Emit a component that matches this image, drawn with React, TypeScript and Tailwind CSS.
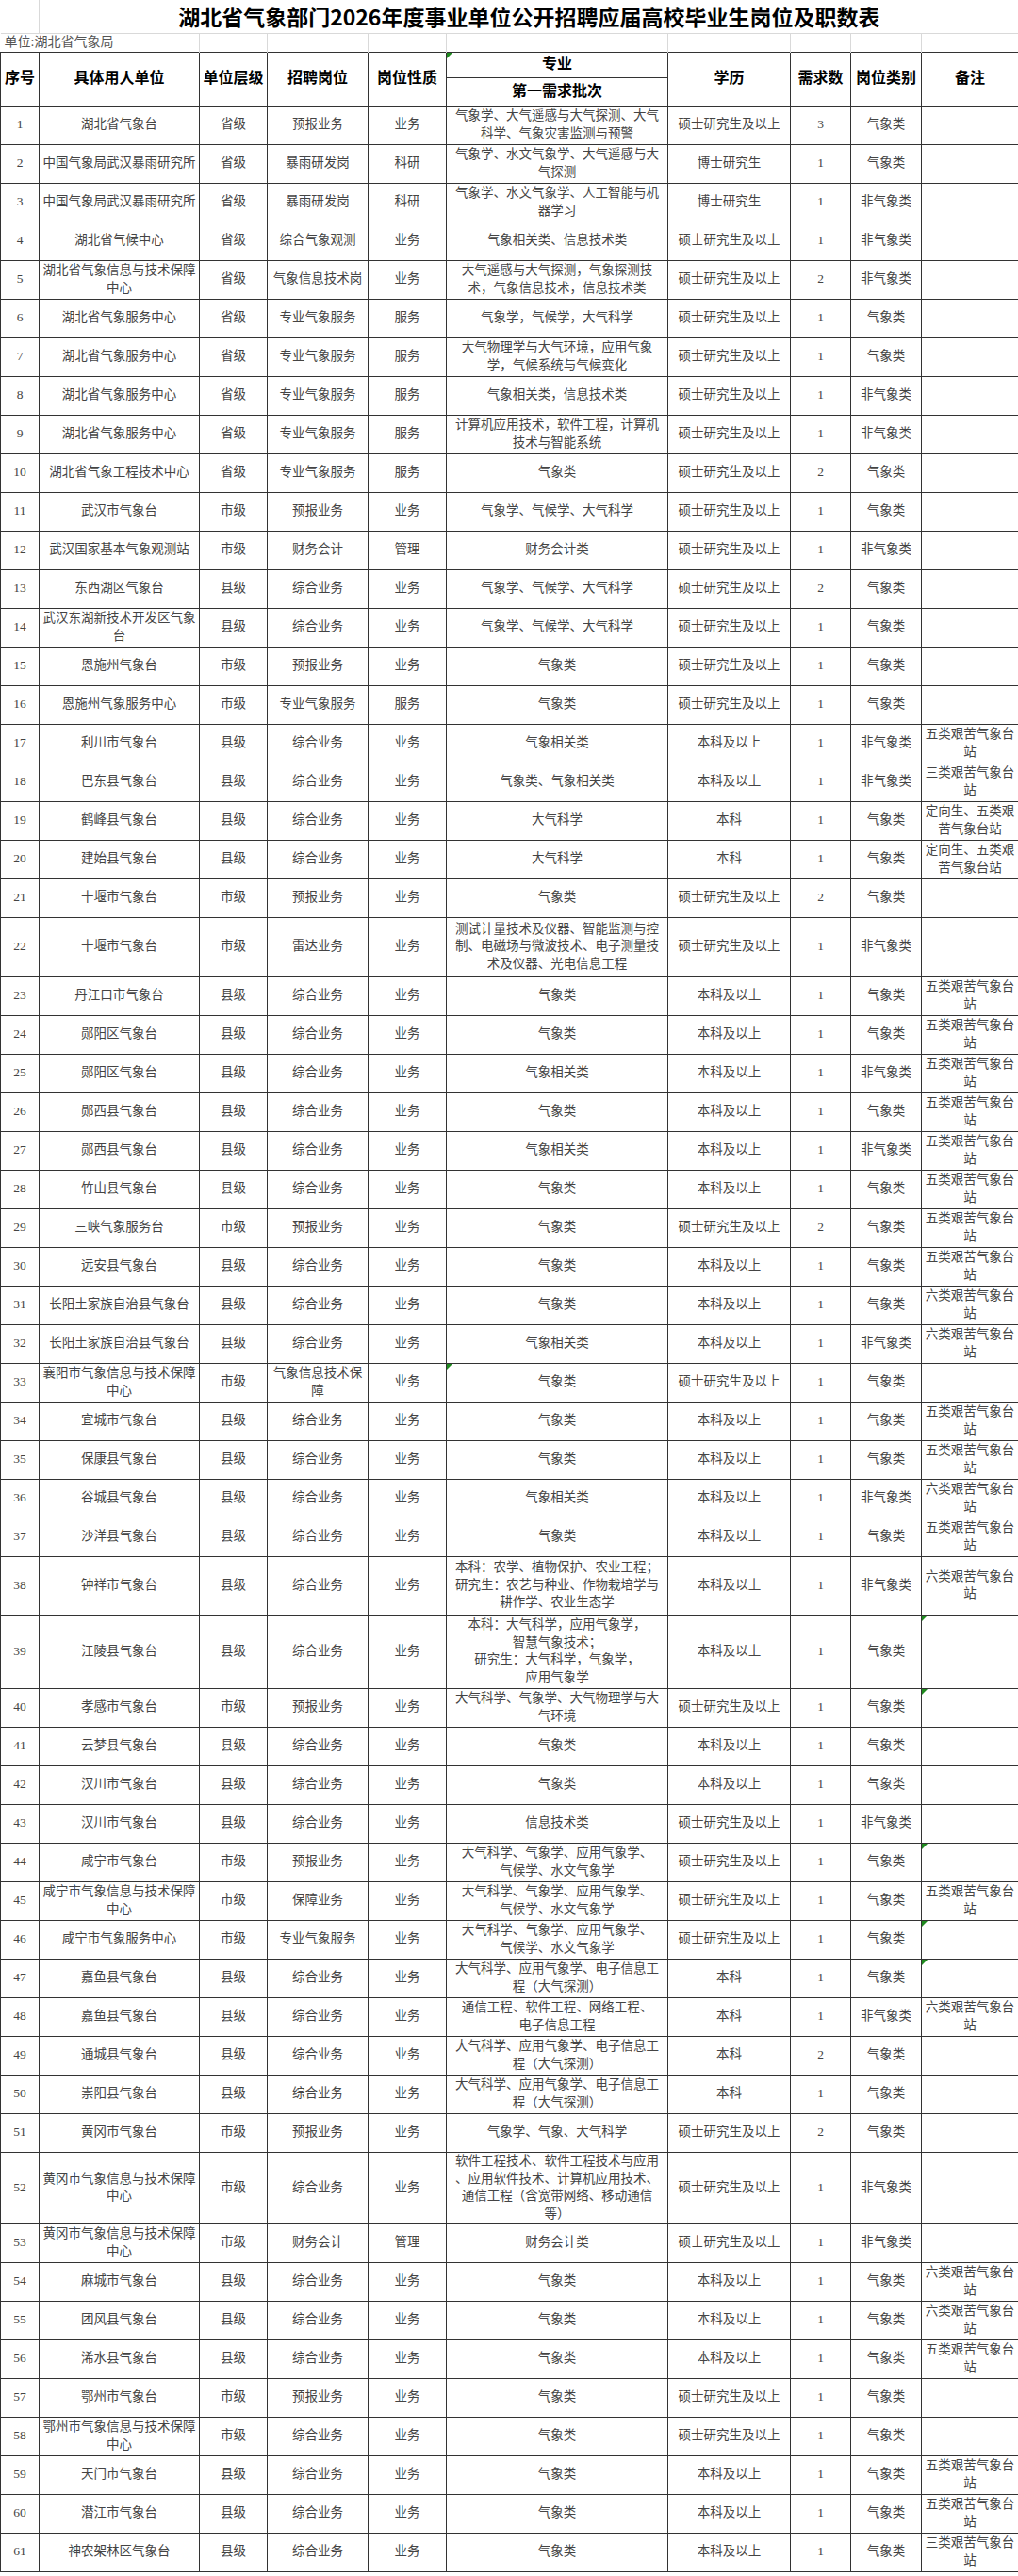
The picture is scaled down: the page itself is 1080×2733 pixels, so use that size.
import React from "react";

type Row = [string, string, string, string, string, string, number, string, string?];

const N3 = "三类艰苦气象台\n站";
const N5 = "五类艰苦气象台\n站";
const N6 = "六类艰苦气象台\n站";
const DX = "定向生、五类艰\n苦气象台站";
const MS = "硕士研究生及以上";
const BK = "本科及以上";
const XX = "综合业务";

const rows: Row[] = [
  ["湖北省气象台", "省级", "预报业务", "业务", "气象学、大气遥感与大气探测、大气\n科学、气象灾害监测与预警", MS, 3, "气象类"],
  ["中国气象局武汉暴雨研究所", "省级", "暴雨研发岗", "科研", "气象学、水文气象学、大气遥感与大\n气探测", "博士研究生", 1, "气象类"],
  ["中国气象局武汉暴雨研究所", "省级", "暴雨研发岗", "科研", "气象学、水文气象学、人工智能与机\n器学习", "博士研究生", 1, "非气象类"],
  ["湖北省气候中心", "省级", "综合气象观测", "业务", "气象相关类、信息技术类", MS, 1, "非气象类"],
  ["湖北省气象信息与技术保障\n中心", "省级", "气象信息技术岗", "业务", "大气遥感与大气探测，气象探测技\n术，气象信息技术，信息技术类", MS, 2, "非气象类"],
  ["湖北省气象服务中心", "省级", "专业气象服务", "服务", "气象学，气候学，大气科学", MS, 1, "气象类"],
  ["湖北省气象服务中心", "省级", "专业气象服务", "服务", "大气物理学与大气环境，应用气象\n学，气候系统与气候变化", MS, 1, "气象类"],
  ["湖北省气象服务中心", "省级", "专业气象服务", "服务", "气象相关类，信息技术类", MS, 1, "非气象类"],
  ["湖北省气象服务中心", "省级", "专业气象服务", "服务", "计算机应用技术，软件工程，计算机\n技术与智能系统", MS, 1, "非气象类"],
  ["湖北省气象工程技术中心", "省级", "专业气象服务", "服务", "气象类", MS, 2, "气象类"],
  ["武汉市气象台", "市级", "预报业务", "业务", "气象学、气候学、大气科学", MS, 1, "气象类"],
  ["武汉国家基本气象观测站", "市级", "财务会计", "管理", "财务会计类", MS, 1, "非气象类"],
  ["东西湖区气象台", "县级", XX, "业务", "气象学、气候学、大气科学", MS, 2, "气象类"],
  ["武汉东湖新技术开发区气象\n台", "县级", XX, "业务", "气象学、气候学、大气科学", MS, 1, "气象类"],
  ["恩施州气象台", "市级", "预报业务", "业务", "气象类", MS, 1, "气象类"],
  ["恩施州气象服务中心", "市级", "专业气象服务", "服务", "气象类", MS, 1, "气象类"],
  ["利川市气象台", "县级", XX, "业务", "气象相关类", BK, 1, "非气象类", N5],
  ["巴东县气象台", "县级", XX, "业务", "气象类、气象相关类", BK, 1, "非气象类", N3],
  ["鹤峰县气象台", "县级", XX, "业务", "大气科学", "本科", 1, "气象类", DX],
  ["建始县气象台", "县级", XX, "业务", "大气科学", "本科", 1, "气象类", DX],
  ["十堰市气象台", "市级", "预报业务", "业务", "气象类", MS, 2, "气象类"],
  ["十堰市气象台", "市级", "雷达业务", "业务", "测试计量技术及仪器、智能监测与控\n制、电磁场与微波技术、电子测量技\n术及仪器、光电信息工程", MS, 1, "非气象类"],
  ["丹江口市气象台", "县级", XX, "业务", "气象类", BK, 1, "气象类", N5],
  ["郧阳区气象台", "县级", XX, "业务", "气象类", BK, 1, "气象类", N5],
  ["郧阳区气象台", "县级", XX, "业务", "气象相关类", BK, 1, "非气象类", N5],
  ["郧西县气象台", "县级", XX, "业务", "气象类", BK, 1, "气象类", N5],
  ["郧西县气象台", "县级", XX, "业务", "气象相关类", BK, 1, "非气象类", N5],
  ["竹山县气象台", "县级", XX, "业务", "气象类", BK, 1, "气象类", N5],
  ["三峡气象服务台", "市级", "预报业务", "业务", "气象类", MS, 2, "气象类", N5],
  ["远安县气象台", "县级", XX, "业务", "气象类", BK, 1, "气象类", N5],
  ["长阳土家族自治县气象台", "县级", XX, "业务", "气象类", BK, 1, "气象类", N6],
  ["长阳土家族自治县气象台", "县级", XX, "业务", "气象相关类", BK, 1, "非气象类", N6],
  ["襄阳市气象信息与技术保障\n中心", "市级", "气象信息技术保\n障", "业务", "气象类", MS, 1, "气象类"],
  ["宜城市气象台", "县级", XX, "业务", "气象类", BK, 1, "气象类", N5],
  ["保康县气象台", "县级", XX, "业务", "气象类", BK, 1, "气象类", N5],
  ["谷城县气象台", "县级", XX, "业务", "气象相关类", BK, 1, "非气象类", N6],
  ["沙洋县气象台", "县级", XX, "业务", "气象类", BK, 1, "气象类", N5],
  ["钟祥市气象台", "县级", XX, "业务", "本科：农学、植物保护、农业工程；\n研究生：农艺与种业、作物栽培学与\n耕作学、农业生态学", BK, 1, "非气象类", N6],
  ["江陵县气象台", "县级", XX, "业务", "本科：大气科学，应用气象学，\n智慧气象技术；\n研究生：大气科学，气象学，\n应用气象学", BK, 1, "气象类"],
  ["孝感市气象台", "市级", "预报业务", "业务", "大气科学、气象学、大气物理学与大\n气环境", MS, 1, "气象类"],
  ["云梦县气象台", "县级", XX, "业务", "气象类", BK, 1, "气象类"],
  ["汉川市气象台", "县级", XX, "业务", "气象类", BK, 1, "气象类"],
  ["汉川市气象台", "县级", XX, "业务", "信息技术类", MS, 1, "非气象类"],
  ["咸宁市气象台", "市级", "预报业务", "业务", "大气科学、气象学、应用气象学、\n气候学、水文气象学", MS, 1, "气象类"],
  ["咸宁市气象信息与技术保障\n中心", "市级", "保障业务", "业务", "大气科学、气象学、应用气象学、\n气候学、水文气象学", MS, 1, "气象类", N5],
  ["咸宁市气象服务中心", "市级", "专业气象服务", "业务", "大气科学、气象学、应用气象学、\n气候学、水文气象学", MS, 1, "气象类"],
  ["嘉鱼县气象台", "县级", XX, "业务", "大气科学、应用气象学、电子信息工\n程（大气探测）", "本科", 1, "气象类"],
  ["嘉鱼县气象台", "县级", XX, "业务", "通信工程、软件工程、网络工程、\n电子信息工程", "本科", 1, "非气象类", N6],
  ["通城县气象台", "县级", XX, "业务", "大气科学、应用气象学、电子信息工\n程（大气探测）", "本科", 2, "气象类"],
  ["崇阳县气象台", "县级", XX, "业务", "大气科学、应用气象学、电子信息工\n程（大气探测）", "本科", 1, "气象类"],
  ["黄冈市气象台", "市级", "预报业务", "业务", "气象学、气象、大气科学", MS, 2, "气象类"],
  ["黄冈市气象信息与技术保障\n中心", "市级", XX, "业务", "软件工程技术、软件工程技术与应用\n、应用软件技术、计算机应用技术、\n通信工程（含宽带网络、移动通信\n等）", MS, 1, "非气象类"],
  ["黄冈市气象信息与技术保障\n中心", "市级", "财务会计", "管理", "财务会计类", MS, 1, "非气象类"],
  ["麻城市气象台", "县级", XX, "业务", "气象类", BK, 1, "气象类", N6],
  ["团风县气象台", "县级", XX, "业务", "气象类", BK, 1, "气象类", N6],
  ["浠水县气象台", "县级", XX, "业务", "气象类", BK, 1, "气象类", N5],
  ["鄂州市气象台", "市级", "预报业务", "业务", "气象类", MS, 1, "气象类"],
  ["鄂州市气象信息与技术保障\n中心", "市级", XX, "业务", "气象类", MS, 1, "气象类"],
  ["天门市气象台", "县级", XX, "业务", "气象类", BK, 1, "气象类", N5],
  ["潜江市气象台", "县级", XX, "业务", "气象类", BK, 1, "气象类", N5],
  ["神农架林区气象台", "县级", XX, "业务", "气象类", BK, 1, "气象类", N3],
];

// taller rows (1-based index)
const heights: Record<number, string> = {
  22: "h-[63px]",
  38: "h-[62px]",
  39: "h-[78px]",
  52: "h-[76px]",
};

// little green excel markers
const majorFlags = [33];
const noteFlags = [39, 40, 44, 46, 47];

function Flag() {
  return (
    <span className="absolute left-0 top-0 h-0 w-0 border-t-[6px] border-r-[6px] border-t-[#1f8a1f] border-r-transparent" />
  );
}

const td = "border border-[#333] px-[2px] text-center align-middle whitespace-pre-line";
const th = "border border-[#333] px-[2px] text-center align-middle font-bold text-[16px] text-black";
const light = "border-r border-[#d9d9d9]";

export default function App() {
  return (
    <div className="w-[1080px] min-h-[2733px] bg-white font-['Liberation_Serif','Noto_Sans_CJK_SC',serif]">
      <table className="w-[1080px] table-fixed border-collapse text-[13.5px] leading-[18.5px] text-[#444]">
        <colgroup>
          <col className="w-[41px]" />
          <col className="w-[170px]" />
          <col className="w-[72px]" />
          <col className="w-[107px]" />
          <col className="w-[83px]" />
          <col className="w-[235px]" />
          <col className="w-[130px]" />
          <col className="w-[64px]" />
          <col className="w-[75px]" />
          <col className="w-[103px]" />
        </colgroup>
        <thead>
          <tr className="h-[35px]">
            <td className="border-r border-b border-[#d9d9d9]" />
            <td
              colSpan={9}
              className="border-b border-[#d9d9d9] text-center align-middle font-['Noto_Sans_CJK_SC',sans-serif] text-[23px] font-bold leading-[28px] text-black"
            >
              湖北省气象部门2026年度事业单位公开招聘应届高校毕业生岗位及职数表
            </td>
          </tr>
          <tr className="h-[20px]">
            <td colSpan={2} className={`${light} pl-[4px] text-left align-middle text-[14px] leading-[18px] text-[#555]`}>
              单位:湖北省气象局
            </td>
            <td className={light} />
            <td className={light} />
            <td className={light} />
            <td className={light} />
            <td className={light} />
            <td className={light} />
            <td className={light} />
            <td />
          </tr>
          <tr className="h-[27px]">
            <th rowSpan={2} className={th}>序号</th>
            <th rowSpan={2} className={th}>具体用人单位</th>
            <th rowSpan={2} className={th}>单位层级</th>
            <th rowSpan={2} className={th}>招聘岗位</th>
            <th rowSpan={2} className={th}>岗位性质</th>
            <th className={`${th} relative`}>
              <Flag />
              专业
            </th>
            <th rowSpan={2} className={th}>学历</th>
            <th rowSpan={2} className={th}>需求数</th>
            <th rowSpan={2} className={th}>岗位类别</th>
            <th rowSpan={2} className={th}>备注</th>
          </tr>
          <tr className="h-[30px]">
            <th className={th}>第一需求批次</th>
          </tr>
        </thead>
        <tbody>
          {rows.map((r, i) => {
            const n = i + 1;
            const [unit, level, post, nature, major, edu, num, cat, note] = r;
            return (
              <tr key={n} className={heights[n] ?? "h-[41px]"}>
                <td className={td}>{n}</td>
                <td className={td}>{unit}</td>
                <td className={td}>{level}</td>
                <td className={td}>{post}</td>
                <td className={td}>{nature}</td>
                <td className={`${td} relative`}>
                  {majorFlags.includes(n) && <Flag />}
                  {major}
                </td>
                <td className={td}>{edu}</td>
                <td className={td}>{num}</td>
                <td className={td}>{cat}</td>
                <td className={`${td} relative`}>
                  {noteFlags.includes(n) && <Flag />}
                  {note ?? ""}
                </td>
              </tr>
            );
          })}
        </tbody>
      </table>
    </div>
  );
}
